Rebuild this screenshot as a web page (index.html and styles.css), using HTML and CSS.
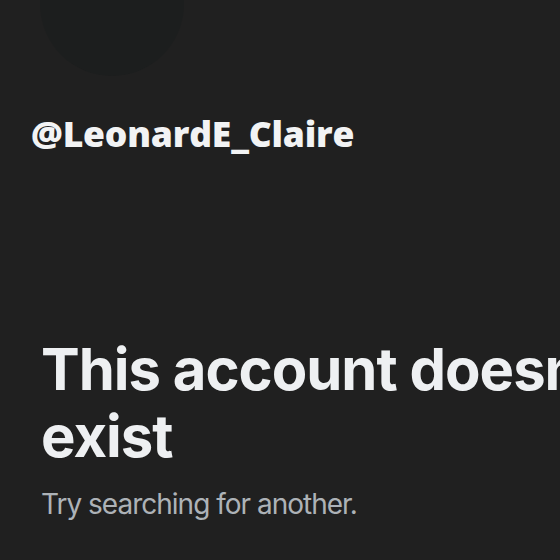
FILE: index.html
```html
<!DOCTYPE html>
<html lang="en">
<head>
<meta charset="utf-8">
<title>Account</title>
<link rel="stylesheet" href="styles.css">
</head>
<body>
<main class="page">
  <div class="avatar"></div>
  <div class="handle">@LeonardE_Claire</div>
  <section class="empty">
    <h1 class="empty-title">This account doesn’t exist</h1>
    <p class="empty-sub">Try searching for another.</p>
  </section>
</main>
</body>
</html>
```
FILE: styles.css
```css
html, body {
  margin: 0;
  padding: 0;
  background: #202020;
  overflow: hidden;
}
.page {
  width: 560px;
  height: 560px;
  overflow: hidden;
  display: flex;
  flex-direction: column;
}
.avatar {
  flex: none;
  width: 144px;
  height: 144px;
  margin-top: -68px;
  margin-left: 40px;
  border-radius: 50%;
  background: #1c1e1e;
}
.handle {
  margin-top: 35px;
  padding-left: 31px;
  font-family: "Open Sans", "DejaVu Sans", sans-serif;
  font-weight: 800;
  font-size: 35.5px;
  line-height: 44px;
  letter-spacing: -0.2px;
  color: #f2f3f4;
  white-space: nowrap;
}
.empty {
  margin-top: 181px;
  padding-left: 41px;
}
.empty-title {
  margin: 0;
  width: 600px;
  font-family: Inter, "Noto Sans", sans-serif;
  font-weight: 700;
  font-size: 58px;
  line-height: 67px;
  letter-spacing: -1px;
  color: #eef0f2;
}
.empty-sub {
  margin: 16px 0 0;
  font-family: Inter, "Noto Sans", sans-serif;
  font-weight: 400;
  font-size: 28px;
  line-height: 36px;
  letter-spacing: -1px;
  color: #adb2b7;
}
```
